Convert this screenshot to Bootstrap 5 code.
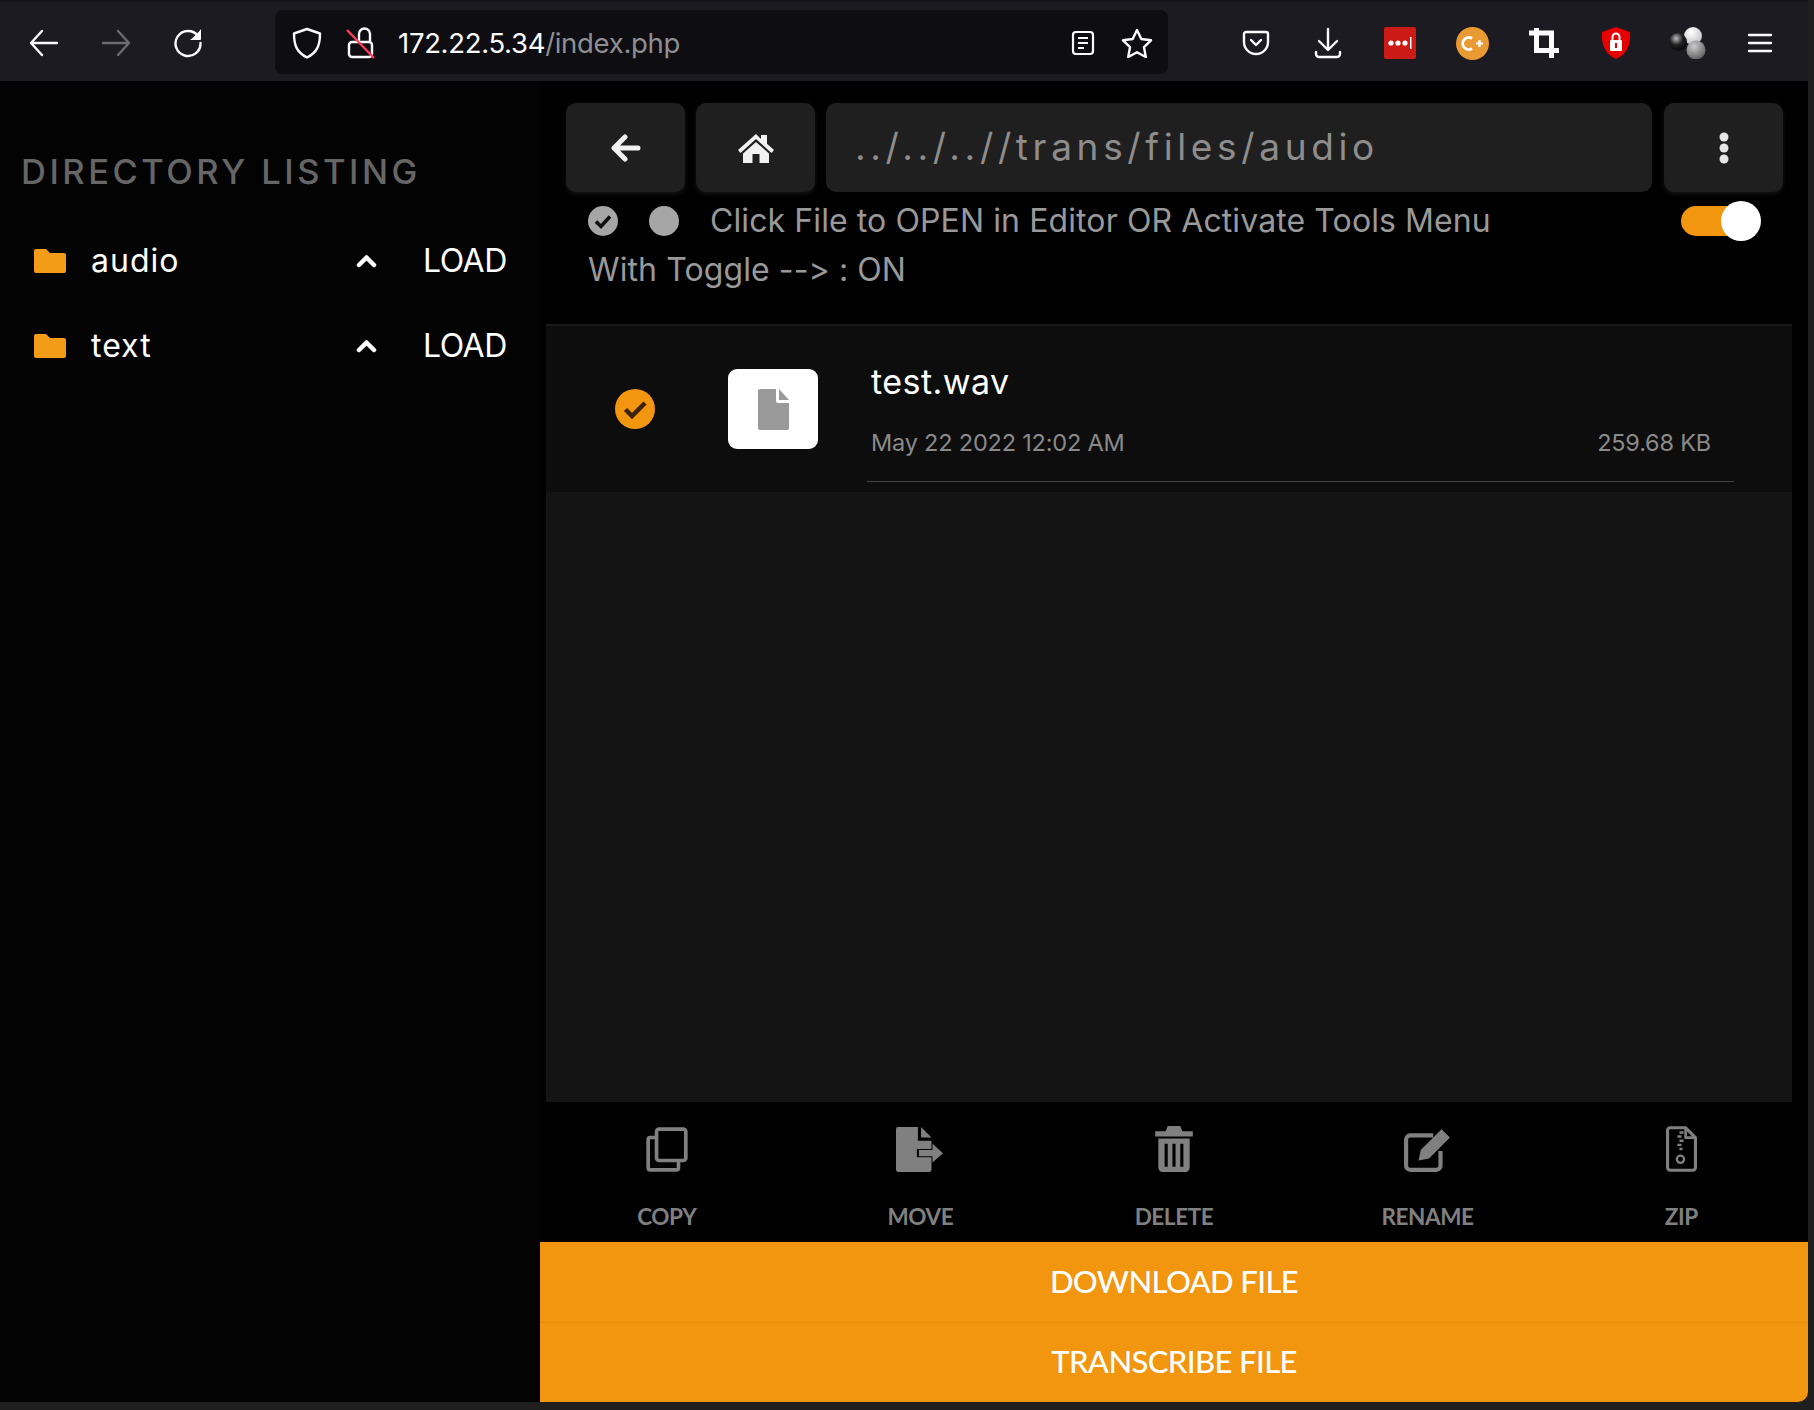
<!DOCTYPE html>
<html lang="en">
<head>
    <meta charset="UTF-8">
    <title>File Manager</title>
    <link rel="stylesheet" href="https://cdn.jsdelivr.net/npm/bootstrap@5.3.0/dist/css/bootstrap.min.css">
    <style>
        html, body { height: 1410px; overflow: hidden; }
        body { background: #1f1f1f; font-family: Inter, "Liberation Sans", sans-serif; font-variant-ligatures: none; font-feature-settings: "calt" 0; }
        .win { width: 1808px; height: 1402px; border-bottom-right-radius: 10px; overflow: hidden; background: #000; }

        /* browser chrome */
        .chrome { height: 81px; background: #1c1b22; border-top: 2px solid #15141a; padding: 8px 12px 7px 8px; flex: none; }
        .tb-btn { width: 72px; height: 64px; flex: none; color: #fbfbfe; padding-top: 2px; }
        .urlbar { width: 893px; height: 64px; margin-left: 51px; background: #0e0d12; border-radius: 8px; padding: 1px 8px 0 17px; }
        .url-text { font-size: 27.5px; color: #fbfbfe; margin-left: 18px; letter-spacing: -.3px; padding-top: 3px; }
        .url-text span { color: #8f8f92; }
        .url-ico { width: 46px; }
        .lock-ico { margin-left: 20px; }

        /* sidebar */
        .side { width: 540px; background: #030303; flex: none; }
        .side-title { font-size: 34.5px; color: #666; letter-spacing: 3.5px; padding: 68px 0 0 21px; line-height: 45px; font-weight: 500; margin: 0 0 24px; }
        .folder-row { height: 85px; color: #fff; font-size: 32px; padding: 0 35px 0 34px; letter-spacing: 1px; }
        .folder-name { margin-left: 25px; }
        .load-txt { width: 82px; margin-left: 46px; text-align: right; white-space: nowrap; font-size: 32px; letter-spacing: -.5px; }

        /* main */
        .topbar { padding: 22px 25px 0 26px; gap: 11px; flex: none; }
        .tile-btn { width: 119px; height: 89px; background: #1f1f1f; border-radius: 10px; box-shadow: 0 2px 5px rgba(60,60,60,.35); flex: none; }
        .path-box { height: 89px; background: #1f1f1f; border-radius: 10px; flex: 1; color: #8d8d8d; font-size: 37px; padding: 0 0 2px 29px; letter-spacing: 4.65px; margin-right: 1px; }
        .note { height: 132px; padding: 5px 0 0 48px; color: #999; font-size: 32px; line-height: 48px; flex: none; position: relative; letter-spacing: .1px; }
        .note-ico { width: 30px; height: 30px; flex: none; }
        .note-first { gap: 31px; }
        .note-line2 { padding-top: 1px; }
        .switch-track { position: absolute; left: 1141px; top: 14px; width: 70px; height: 30px; border-radius: 15px; background: #f2950f; }
        .switch-thumb { position: absolute; right: -10px; top: -5px; width: 40px; height: 40px; border-radius: 50%; background: #fff; }
        .panel-wrap { margin-left: 6px; margin-right: 16px; flex: 1; background: #141414; border-top: 2px solid #1a1a1a; }
        .file-item { height: 166px; background: #0d0d0d; color: #fff; padding-left: 69px; }
        .file-thumb { width: 90px; height: 80px; background: #fff; border-radius: 9px; margin-left: 73px; flex: none; }
        .file-info { margin-left: 49px; width: 867px; height: 156px; margin-top: -10px; padding: 0 23px 0 4px; border-bottom: 1px solid #444; }
        .file-name { font-size: 34px; padding-top: 35px; line-height: 42px; letter-spacing: .45px; }
        .file-meta { font-size: 23.5px; color: #8a8a8a; padding-top: 22px; letter-spacing: -.2px; line-height: 36px; }
        .tools { height: 140px; flex: none; }
        .tool { width: 20%; padding-top: 24px; color: #808080; font-family: Lato, sans-serif; font-weight: 700; font-size: 22.5px; letter-spacing: -.4px; }
        .tool svg { display: block; margin: 0 auto; height: 46px; }
        .tool-label { margin-top: 31px; line-height: 28px; }
        .cta { height: 80px; background: #f2950f; color: #fff; font-size: 31px; font-family: Lato, sans-serif; font-weight: 500; flex: none; border: 0; width: 100%; letter-spacing: -.6px; padding-bottom: 3px; }
        .cta + .cta { border-top: 1px solid #e58d0f; }
    </style>
</head>
<body>
<div class="win d-flex flex-column">

    <!-- browser toolbar -->
    <div class="chrome d-flex align-items-center">
        <div class="tb-btn d-flex align-items-center justify-content-center">
            <svg width="30" height="28" viewBox="0 0 30 28" fill="none" stroke="#fbfbfe" stroke-width="2.4" stroke-linecap="round" stroke-linejoin="round"><path d="M2 14H28M13 2 2 14l11 12"/></svg>
        </div>
        <div class="tb-btn d-flex align-items-center justify-content-center">
            <svg width="30" height="28" viewBox="0 0 30 28" fill="none" stroke="#6c6c70" stroke-width="2.4" stroke-linecap="round" stroke-linejoin="round"><path d="M28 14H2M17 2l11 12-11 12"/></svg>
        </div>
        <div class="tb-btn d-flex align-items-center justify-content-center">
            <svg width="30" height="30" viewBox="0 0 30 30" fill="none" stroke="#fbfbfe" stroke-width="2.4" stroke-linecap="round"><path d="M25 8A12.5 12.5 0 1 0 27.500 15"/><path d="M27.500 2v9.500H18" fill="#fbfbfe" stroke-width="1"/></svg>
        </div>
        <div class="urlbar d-flex align-items-center">
            <svg width="30" height="32" viewBox="0 0 30 32" fill="none" stroke="#fbfbfe" stroke-width="2.400" stroke-linejoin="round"><path d="M15 2 28 6.500c0 12-3 19-13 24C5 25.500 2 18.500 2 6.500Z"/></svg>
            <svg class="lock-ico" width="38" height="32" viewBox="0 0 30 32" fill="none" stroke="#fbfbfe" stroke-width="2.400"><rect x="3" y="15" width="23" height="15" rx="3"/><path d="M13 15V7a5.500 5.500 0 0 1 11 0v8"/><path d="M1 3 28 31" stroke="#ff3b5c"/></svg>
            <div class="url-text">172.22.5.34<span>/index.php</span></div>
            <div class="ms-auto d-flex align-items-center">
                <div class="url-ico text-center lh-1">
                    <svg width="24" height="26" viewBox="0 0 24 26" fill="none" stroke="#fbfbfe" stroke-width="2.200"><rect x="2" y="2" width="20" height="22" rx="3"/><path d="M7 8h10M7 13h10M7 18h6"/></svg>
                </div>
                <div class="url-ico ms-2 text-center lh-1">
                    <svg width="32" height="30" viewBox="0 0 32 30" fill="none" stroke="#fbfbfe" stroke-width="2.400" stroke-linejoin="round"><path d="M16 2l4.300 9 9.700 1.300-7 6.900 1.800 9.800L16 24.300 7.200 29 9 19.200 2 12.300 11.700 11Z"/></svg>
                </div>
            </div>
        </div>
        <div class="tb-btn ms-auto d-flex align-items-center justify-content-center">
            <svg width="28" height="26" viewBox="0 0 28 26" fill="none" stroke="#fbfbfe" stroke-width="2.400" stroke-linecap="round" stroke-linejoin="round"><path d="M4 2h20a2 2 0 0 1 2 2v8a12 12 0 0 1-24 0V4a2 2 0 0 1 2-2Z"/><path d="M9 10l5 5 5-5"/></svg>
        </div>
        <div class="tb-btn d-flex align-items-center justify-content-center">
            <svg width="28" height="32" viewBox="0 0 28 32" fill="none" stroke="#fbfbfe" stroke-width="2.400" stroke-linecap="round" stroke-linejoin="round"><path d="M14 2v20M5 14l9 9 9-9M2 25v2a3 3 0 0 0 3 3h18a3 3 0 0 0 3-3v-2"/></svg>
        </div>
        <div class="tb-btn d-flex align-items-center justify-content-center">
            <svg width="32" height="32" viewBox="0 0 32 32"><rect width="32" height="32" rx="2" fill="#cc1a17"/><circle cx="7" cy="16" r="2.600" fill="#fff"/><circle cx="14" cy="16" r="2.600" fill="#fff"/><circle cx="21" cy="16" r="2.600" fill="#fff"/><rect x="26" y="10" width="1.500" height="12" fill="#fff"/></svg>
        </div>
        <div class="tb-btn d-flex align-items-center justify-content-center">
            <svg width="33" height="33" viewBox="0 0 33 33"><circle cx="16.500" cy="16.500" r="16.500" fill="#e99a33"/><path d="M16 11.500a6 6 0 1 0 0 10" fill="none" stroke="#fff" stroke-width="2.800"/><path d="M20 16.500h7M23.500 13v7" stroke="#fff" stroke-width="2.200"/></svg>
        </div>
        <div class="tb-btn d-flex align-items-center justify-content-center">
            <svg width="30" height="30" viewBox="0 0 30 30" fill="none" stroke="#fbfbfe" stroke-width="5"><path d="M0 5H22.500V30M7.500 0V22.500H30"/></svg>
        </div>
        <div class="tb-btn d-flex align-items-center justify-content-center">
            <svg width="30" height="32" viewBox="0 0 30 32"><path d="M15 0 29 5c1 13-3 22-14 27C4 27 0 18 1 5Z" fill="#e60000"/><rect x="9" y="13" width="12" height="11" rx="1" fill="#fff"/><path d="M11.500 13V10a3.500 3.500 0 0 1 7 0v3" fill="none" stroke="#fff" stroke-width="2"/><rect x="14" y="16" width="2" height="5" fill="#e60000"/></svg>
        </div>
        <div class="tb-btn d-flex align-items-center justify-content-center">
            <svg width="38" height="32" viewBox="0 0 38 32"><defs><radialGradient id="gb" cx=".4" cy=".3" r=".8"><stop offset="0" stop-color="#bbb"/><stop offset=".45" stop-color="#222"/><stop offset="1" stop-color="#000"/></radialGradient><radialGradient id="gw" cx=".4" cy=".3" r=".8"><stop offset="0" stop-color="#fff"/><stop offset="1" stop-color="#bbb"/></radialGradient><radialGradient id="gg" cx=".4" cy=".3" r=".8"><stop offset="0" stop-color="#ccc"/><stop offset="1" stop-color="#555"/></radialGradient></defs><circle cx="24" cy="9" r="9" fill="url(#gw)"/><circle cx="9" cy="15" r="9" fill="url(#gb)"/><circle cx="27" cy="23" r="9.500" fill="url(#gg)"/></svg>
        </div>
        <div class="tb-btn d-flex align-items-center justify-content-center">
            <svg width="26" height="22" viewBox="0 0 26 22" stroke="#fbfbfe" stroke-width="2.400" stroke-linecap="round"><path d="M2 3h22M2 11h22M2 19h22"/></svg>
        </div>
    </div>

    <div class="d-flex flex-grow-1" style="min-height:0">
        <!-- directory listing -->
        <aside class="side">
            <h2 class="side-title">DIRECTORY LISTING</h2>
            <div class="folder-row d-flex align-items-center">
                <svg width="32" height="24" viewBox="0 0 32 24" fill="#f39c18"><path d="M2 0h10l4 4h14a2 2 0 0 1 2 2v16a2 2 0 0 1-2 2H2a2 2 0 0 1-2-2V2a2 2 0 0 1 2-2Z"/></svg>
                <span class="folder-name flex-grow-1">audio</span>
                <svg width="21" height="14" viewBox="0 0 21 14" fill="none" stroke="#fff" stroke-width="4.500" stroke-linecap="round" stroke-linejoin="round"><path d="M3 11l7.500-7.500L18 11"/></svg>
                <span class="load-txt">LOAD</span>
            </div>
            <div class="folder-row d-flex align-items-center">
                <svg width="32" height="24" viewBox="0 0 32 24" fill="#f39c18"><path d="M2 0h10l4 4h14a2 2 0 0 1 2 2v16a2 2 0 0 1-2 2H2a2 2 0 0 1-2-2V2a2 2 0 0 1 2-2Z"/></svg>
                <span class="folder-name flex-grow-1">text</span>
                <svg width="21" height="14" viewBox="0 0 21 14" fill="none" stroke="#fff" stroke-width="4.500" stroke-linecap="round" stroke-linejoin="round"><path d="M3 11l7.500-7.500L18 11"/></svg>
                <span class="load-txt">LOAD</span>
            </div>
        </aside>

        <!-- file browser -->
        <main class="flex-grow-1 d-flex flex-column">
            <div class="topbar d-flex">
                <div class="tile-btn d-flex align-items-center justify-content-center">
                    <svg width="30" height="28" viewBox="0 0 30 28" fill="none" stroke="#f2f2f2" stroke-width="5" stroke-linecap="round" stroke-linejoin="round"><path d="M27 14H5M14 3 3 14l11 11"/></svg>
                </div>
                <div class="tile-btn d-flex align-items-center justify-content-center">
                    <svg width="36" height="30" viewBox="0 0 36 30" fill="#f2f2f2"><path d="M18 1 0 17l2.500 3L18 6l15.500 14 2.500-3-7-6.200V2h-6v4Z"/><path d="M18 9 5 20.500V30h9.500v-9h7v9H31v-9.500Z"/></svg>
                </div>
                <div class="path-box d-flex align-items-center">../../..//trans/files/audio</div>
                <div class="tile-btn d-flex align-items-center justify-content-center">
                    <svg width="10" height="32" viewBox="0 0 10 32" fill="#e6e6e6"><circle cx="5" cy="5" r="4.500"/><circle cx="5" cy="16" r="4.500"/><circle cx="5" cy="27" r="4.500"/></svg>
                </div>
            </div>

            <div class="note">
                <div class="d-flex align-items-center note-first">
                    <svg class="note-ico" viewBox="0 0 30 30"><circle cx="15" cy="15" r="15" fill="#a6a6a6"/><path d="M8 15.500l5 5 9-10" fill="none" stroke="#111" stroke-width="3.600"/></svg>
                    <span class="note-ico rounded-circle" style="background:#a6a6a6"></span>
                    <span>Click File to OPEN in Editor OR Activate Tools Menu</span>
                </div>
                <div class="note-line2">With Toggle --&gt; : ON</div>
                <div class="switch-track"><div class="switch-thumb"></div></div>
            </div>

            <div class="panel-wrap">
                <div class="file-item d-flex align-items-center">
                    <svg width="40" height="40" viewBox="0 0 40 40"><circle cx="20" cy="20" r="20" fill="#f2950f"/><path d="M10.500 20.500l6.500 6.500 13-13" fill="none" stroke="#3a2208" stroke-width="4.500"/></svg>
                    <div class="file-thumb d-flex align-items-center justify-content-center">
                        <svg width="31" height="41" viewBox="0 0 31 41"><path d="M2 0h16v12a2 2 0 0 0 2 2h11v25a2 2 0 0 1-2 2H2a2 2 0 0 1-2-2V2a2 2 0 0 1 2-2Z" fill="#999"/><path d="M21 0l10 11H21Z" fill="#999"/></svg>
                    </div>
                    <div class="file-info">
                        <div class="file-name">test.wav</div>
                        <div class="file-meta d-flex justify-content-between"><span>May 22 2022 12:02 AM</span><span>259.68 KB</span></div>
                    </div>
                </div>
            </div>

            <div class="tools d-flex text-center">
                <div class="tool">
                    <svg viewBox="0 0 40 44" width="42" fill="none" stroke="#808080" stroke-width="3.500"><rect x="10" y="3" width="28" height="30" rx="2.500"/><path d="M10 11H4a2 2 0 0 0-2 2v27a2 2 0 0 0 2 2h25a2 2 0 0 0 2-2v-7"/></svg>
                    <div class="tool-label">COPY</div>
                </div>
                <div class="tool">
                    <svg viewBox="0 0 46 44" width="48" fill="#808080"><path d="M2 1h19v13h13v8H20v8h14v12a2 2 0 0 1-2 2H2a2 2 0 0 1-2-2V3a2 2 0 0 1 2-2Z"/><path d="M24 1l10 10H24Z"/><path d="M22 23h13v-6l10 9-10 9v-6H22Z"/></svg>
                    <div class="tool-label">MOVE</div>
                </div>
                <div class="tool">
                    <svg viewBox="0 0 36 44" width="38" fill="#808080"><path d="M12 0h12l2 5h10v5H0V5h10Z"/><path fill-rule="evenodd" d="M3 12h30v28a4 4 0 0 1-4 4H7a4 4 0 0 1-4-4ZM9 17v22h3V17Zm7.500 0v22h3V17ZM24 17v22h3V17Z"/></svg>
                    <div class="tool-label">DELETE</div>
                </div>
                <div class="tool">
                    <svg viewBox="0 0 46 44" width="48"><path d="M28 9H6a4 4 0 0 0-4 4v25a4 4 0 0 0 4 4h25a4 4 0 0 0 4-4V24" fill="none" stroke="#808080" stroke-width="4"/><path d="M36 3l8 8-20 20-10 2 2-10Z" fill="#808080"/></svg>
                    <div class="tool-label">RENAME</div>
                </div>
                <div class="tool">
                    <svg viewBox="0 0 30 44" width="31" fill="none" stroke="#808080" stroke-width="3"><path d="M4 1.500h15L28.500 11v29a2.500 2.500 0 0 1-2.500 2.500H4A2.500 2.500 0 0 1 1.500 40V4A2.500 2.500 0 0 1 4 1.500Z"/><path d="M19 2v9h9" stroke-width="2.500"/><path d="M13 6h4M11 10h4M13 14h4M11 18h4M13 22h3" stroke-width="2.400"/><circle cx="14" cy="32" r="3.500" stroke-width="2.200"/></svg>
                    <div class="tool-label">ZIP</div>
                </div>
            </div>

            <button class="cta d-block text-center">DOWNLOAD FILE</button>
            <button class="cta d-block text-center">TRANSCRIBE FILE</button>
        </main>
    </div>
</div>
<script src="https://cdn.jsdelivr.net/npm/bootstrap@5.3.0/dist/js/bootstrap.bundle.min.js"></script>
</body>
</html>
